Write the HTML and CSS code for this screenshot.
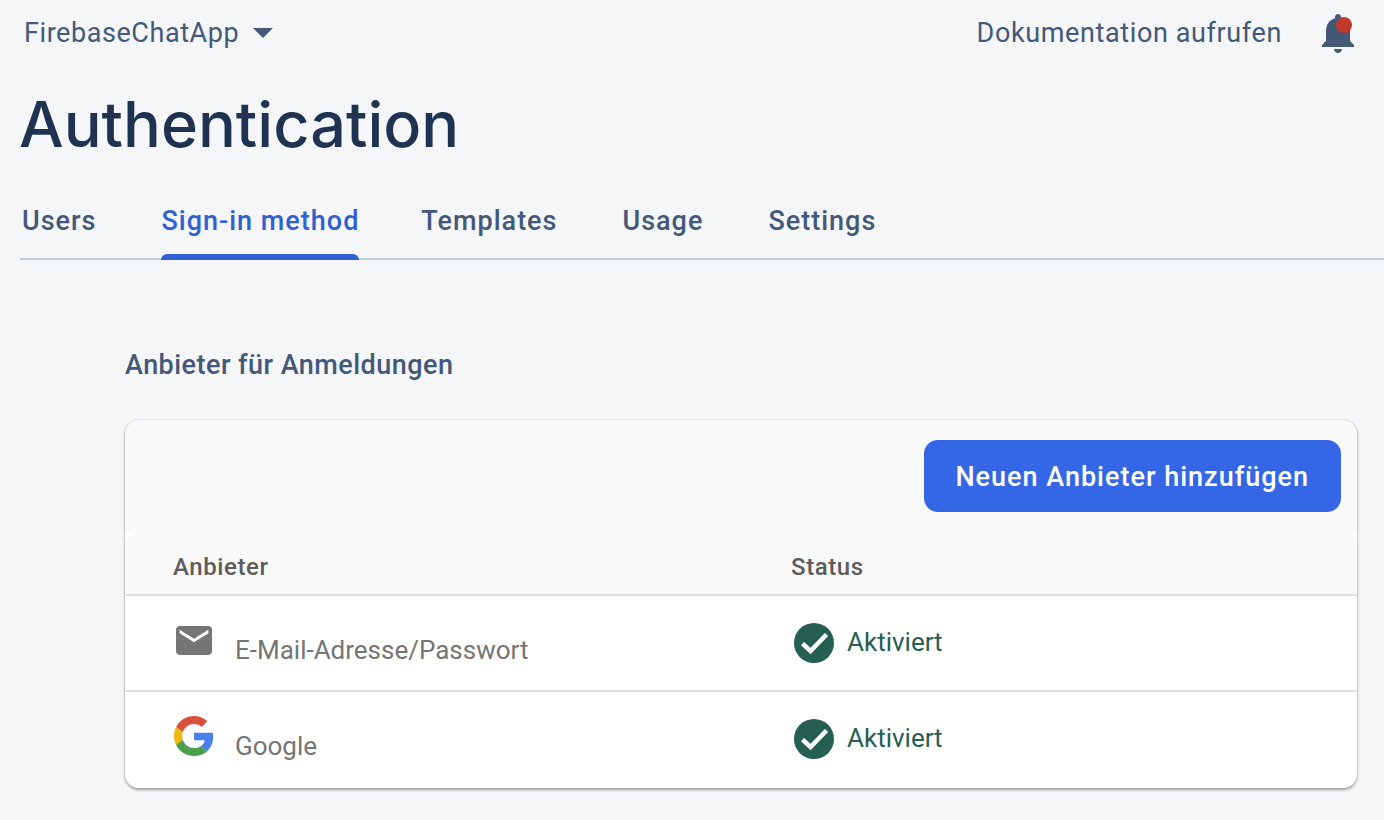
FILE: index.html
```html
<!DOCTYPE html>
<html lang="de">
  <head>
    <meta charset="UTF-8" />
    <title>Authentication</title>
    <link rel="stylesheet" href="styles.css">
  </head>
  <body>
    <header class="topbar">
      <div class="project">
        <span>FirebaseChatApp</span>
        <span class="caret"></span>
      </div>
      <div class="topbar-right">
        <span class="docs">Dokumentation aufrufen</span>
        <div class="bell">
          <svg viewBox="0 0 24 24" width="48" height="48">
            <path fill="#44587a" d="M12 22c1.100 0 2-.9 2-2h-4c0 1.100.9 2 2 2zm6-6v-5c0-3.070-1.630-5.640-4.500-6.320V4c0-.83-.67-1.500-1.500-1.500s-1.500.67-1.500 1.500v.68C7.640 5.360 6 7.920 6 11v5l-2 2v1h16v-1l-2-2z"/>
          </svg>
          <span class="dot"></span>
        </div>
      </div>
    </header>
    <h1 class="title">Authentication</h1>
    <nav class="tabs">
      <a>Users</a>
      <a class="active">Sign-in method</a>
      <a>Templates</a>
      <a>Usage</a>
      <a>Settings</a>
    </nav>
    <main class="content">
      <h2>Anbieter für Anmeldungen</h2>
      <section class="card">
        <div class="card-top">
          <button>Neuen Anbieter hinzufügen</button>
        </div>
        <div class="table">
          <div class="row head">
            <div class="col-name">Anbieter</div>
            <div>Status</div>
          </div>
          <div class="row">
            <div class="col-name provider">
              <div class="icon-box">
                <svg viewBox="2 4 20 16" width="36" height="29">
                  <path fill="#757575" d="M20 4H4c-1.100 0-1.990.9-1.990 2L2 18c0 1.100.9 2 2 2h16c1.100 0 2-.9 2-2V6c0-1.100-.9-2-2-2zm0 4l-8 5-8-5V6l8 5 8-5v2z"/>
                </svg>
              </div>
              <span>E-Mail-Adresse/Passwort</span>
            </div>
            <div class="status">
              <svg viewBox="0 0 40 40" width="40" height="40">
                <circle cx="20" cy="20" r="20" fill="#245f52"/>
                <path fill="none" stroke="#fff" stroke-width="4.500" d="M8.500 20.500l8 7.500 16-16.500"/>
              </svg>
              <span>Aktiviert</span>
            </div>
          </div>
          <div class="row">
            <div class="col-name provider">
              <div class="icon-box">
                <svg viewBox="0 0 48 48" width="40" height="40">
                  <path fill="#d9503a" d="M24 9.500c3.540 0 6.710 1.220 9.210 3.600l6.850-6.850C35.900 2.380 30.470 0 24 0 14.620 0 6.510 5.380 2.560 13.220l7.980 6.190C12.430 13.720 17.740 9.500 24 9.500z"/>
                  <path fill="#4a80ee" d="M46.980 24.550c0-1.570-.15-3.090-.38-4.550H24v9.020h12.940c-.58 2.960-2.260 5.480-4.780 7.180l7.730 6c4.510-4.180 7.090-10.360 7.090-17.650z"/>
                  <path fill="#f0b70f" d="M10.530 28.590c-.48-1.450-.76-2.990-.76-4.590s.27-3.140.76-4.590l-7.980-6.190C.92 16.460 0 20.120 0 24c0 3.880.92 7.540 2.560 10.780l7.970-6.190z"/>
                  <path fill="#4b9e4b" d="M24 48c6.480 0 11.930-2.130 15.890-5.810l-7.730-6c-2.150 1.450-4.920 2.300-8.160 2.300-6.260 0-11.570-4.220-13.470-9.910l-7.980 6.190C6.510 42.620 14.620 48 24 48z"/>
                </svg>
              </div>
              <span>Google</span>
            </div>
            <div class="status">
              <svg viewBox="0 0 40 40" width="40" height="40">
                <circle cx="20" cy="20" r="20" fill="#245f52"/>
                <path fill="none" stroke="#fff" stroke-width="4.500" d="M8.500 20.500l8 7.500 16-16.500"/>
              </svg>
              <span>Aktiviert</span>
            </div>
          </div>
        </div>
      </section>
    </main>
  </body>
</html>
```

FILE: styles.css
```css
* {
  box-sizing: border-box;
  margin: 0;
}
html,
body {
  height: 100%;
  overflow: hidden;
}
body {
  background-color: #f5f6f8;
  color: #44587a;
  font-family: Roboto, "Liberation Sans", sans-serif;
}
.topbar {
  display: flex;
  justify-content: space-between;
  align-items: center;
  height: 64px;
  padding-top: 1px;
  padding-left: 24px;
  padding-right: 22px;
  font-size: 27px;
  letter-spacing: 0.57px;
}
.project {
  display: flex;
  align-items: center;
  gap: 14px;
}
.caret {
  border-left: 10px solid transparent;
  border-right: 10px solid transparent;
  border-top: 10px solid #44587a;
}
.topbar-right {
  display: flex;
  align-items: center;
  gap: 32px;
}
.docs {
  letter-spacing: 0.62px;
}
.bell {
  position: relative;
  height: 48px;
}
.dot {
  position: absolute;
  top: 8px;
  left: 22px;
  width: 16px;
  height: 16px;
  border-radius: 50%;
  background-color: #c0392b;
}
.title {
  padding-left: 19px;
  margin-top: 20px;
  color: #1f3251;
  font-family: Inter, sans-serif;
  font-size: 63px;
  font-weight: 500;
  line-height: 80px;
}
.tabs {
  display: flex;
  gap: 65px;
  margin-top: 36px;
  margin-left: 20px;
  height: 60px;
  border-bottom: 2px solid #c3cbdf;
  font-size: 27px;
  font-weight: 500;
  letter-spacing: 1px;
}
.tabs a {
  position: relative;
  padding-top: 1px;
  line-height: 40px;
  height: 60px;
}
.tabs .active {
  margin-right: -3px;
  color: #3060d2;
}
.tabs .active::after {
  content: "";
  position: absolute;
  left: 0;
  right: 0;
  bottom: 0;
  height: 6px;
  background-color: #3060d2;
  border-radius: 6px 6px 0 0;
}
.tabs a:first-child {
  margin-left: 2px;
}
.content {
  padding-left: 125px;
  padding-right: 27px;
}
.content h2 {
  margin-top: 85px;
  font-size: 27px;
  font-weight: 500;
  letter-spacing: 0.46px;
  line-height: 40px;
}
.card {
  margin-top: 35px;
  height: 368px;
  background-color: #f9f9fa;
  border-radius: 14px;
  box-shadow: 0 2px 3px rgba(0, 0, 0, 0.35), 0 0 2px rgba(0, 0, 0, 0.2);
  overflow: hidden;
}
.card-top {
  display: flex;
  justify-content: flex-end;
  height: 112px;
  padding-top: 20px;
  padding-right: 16px;
}
.card-top button {
  height: 72px;
  padding-top: 2px;
  padding-left: 31px;
  padding-right: 32px;
  background-color: #3566e6;
  color: #fff;
  border: none;
  border-radius: 14px;
  font-family: inherit;
  font-size: 27px;
  font-weight: 500;
  letter-spacing: 1px;
}
.table {
  background-color: #fff;
}
.row {
  display: flex;
  align-items: center;
  height: 96px;
  border-bottom: 2px solid #dfdfdf;
}
.row:last-child {
  border-bottom-color: transparent;
}
.row.head {
  height: 64px;
  padding-top: 8px;
  background-color: #f9f9fa;
  border-radius: 14px 14px 0 0;
  font-size: 24px;
  font-weight: 500;
  color: #5c5c5c;
  letter-spacing: 0.6px;
}
.col-name {
  width: 666px;
  padding-left: 48px;
}
.provider {
  display: flex;
  align-self: flex-start;
  gap: 20px;
  padding-top: 24px;
  font-size: 26px;
  color: #757575;
}
.provider span {
  padding-top: 15px;
  line-height: 30px;
}
.icon-box {
  display: flex;
  justify-content: center;
  align-items: center;
  width: 42px;
  height: 40px;
}
.status {
  display: flex;
  align-items: center;
  gap: 13px;
  margin-left: 3px;
  font-size: 26px;
  color: #245f52;
}
.status span {
  margin-bottom: 2px;
}
```
